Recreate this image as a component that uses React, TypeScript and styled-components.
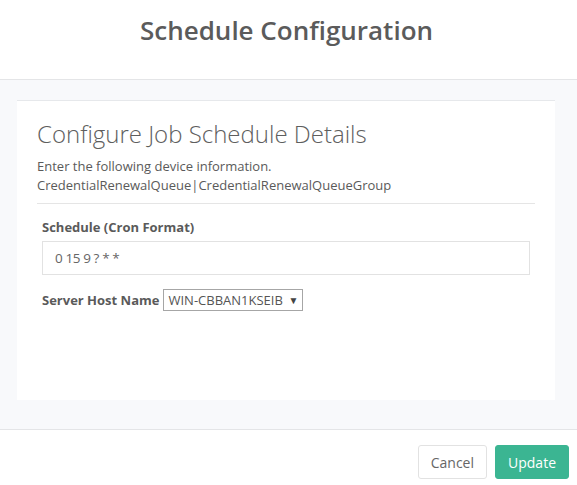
import styled, { createGlobalStyle } from 'styled-components';

const GlobalStyle = createGlobalStyle`
  * { box-sizing: border-box; }
  body {
    margin: 0;
    font-family: "Open Sans", "Noto Sans", sans-serif;
    color: #555;
    background: #fff;
  }
`;

const App = () => {
  return (
    <>
      <GlobalStyle />
      <Modal>
        <Header>
          <h1>Schedule Configuration</h1>
        </Header>
        <Body>
          <Card>
            <h2>Configure Job Schedule Details</h2>
            <p className="desc">
              Enter the following device information.
              <br />
              CredentialRenewalQueue|CredentialRenewalQueueGroup
            </p>
            <Form>
              <Field>
                <label>Schedule (Cron Format)</label>
                <TextInput defaultValue="0 15 9 ? * *" />
              </Field>
              <InlineField>
                <label>Server Host Name</label>
                <SelectWrap>
                  <Select defaultValue="WIN-CBBAN1KSEIB">
                    <option>WIN-CBBAN1KSEIB</option>
                  </Select>
                  <span className="arrow">▼</span>
                </SelectWrap>
              </InlineField>
            </Form>
          </Card>
        </Body>
        <Footer>
          <Button>Cancel</Button>
          <Button scheme="primary">Update</Button>
        </Footer>
      </Modal>
    </>
  );
};

const Modal = styled.div`
  width: 577px;
  height: 485px;
  display: flex;
  flex-direction: column;
`;

const Header = styled.div`
  height: 80px;
  border-bottom: 1px solid #e4e5e7;
  display: flex;
  justify-content: center;
  padding-top: 11px;

  h1 {
    margin: 0 4px 0 0;
    font-size: 26px;
    font-weight: 600;
    color: #5b5b5b;
    line-height: 38px;
  }
`;

const Body = styled.div`
  background: #f8f9fb;
  padding: 20px 22px 29px 17px;
  border-bottom: 1px solid #e4e5e7;
`;

const Card = styled.div`
  background: #fff;
  border-top: 1px solid #e6e8eb;
  height: 300px;
  padding: 16px 20px 0 20px;

  h2 {
    margin: 0;
    font-size: 24px;
    font-weight: 300;
    color: #5e5e5e;
    line-height: 34px;
  }

  .desc {
    margin: 6px 0 0;
    font-size: 13px;
    line-height: 19px;
    color: #5a5a5a;
    padding-bottom: 8px;
    border-bottom: 1px solid #e5e5e5;
  }
`;

const Form = styled.div`
  padding: 14px 5px 0;
  display: flex;
  flex-direction: column;
  gap: 14px;

  label {
    font-size: 13px;
    font-weight: 700;
    color: #5a5a5a;
  }
`;

const Field = styled.div`
  display: flex;
  flex-direction: column;
  gap: 5px;
`;

const InlineField = styled.div`
  display: flex;
  align-items: center;
  gap: 4px;
`;

const TextInput = styled.input`
  height: 34px;
  border: 1px solid #e2e2e2;
  padding: 0 12px;
  font-family: "Open Sans", sans-serif;
  font-size: 13.5px;
  color: #666;
  outline: none;
  letter-spacing: -0.4px;
`;

const SelectWrap = styled.div`
  position: relative;
  display: flex;

  .arrow {
    position: absolute;
    right: 5px;
    top: 4px;
    font-size: 10px;
    color: #444;
    pointer-events: none;
  }
`;

const Select = styled.select`
  appearance: none;
  height: 22px;
  width: 140px;
  border: 1px solid #a6a6a6;
  border-radius: 0;
  background: #fff;
  font-family: "Open Sans", sans-serif;
  font-size: 13px;
  color: #555;
  padding: 0 4px;
  outline: none;
`;

const Footer = styled.div`
  display: flex;
  justify-content: flex-end;
  gap: 8px;
  padding: 15px 8px 0 0;
`;

const Button = styled.button<{ scheme?: 'primary' }>`
  height: 34px;
  padding: 0 12px;
  border-radius: 3px;
  font-family: "Open Sans", sans-serif;
  font-size: 14px;
  cursor: pointer;
  border: 1px solid ${({ scheme }) => (scheme === 'primary' ? '#3bb592' : '#e2e2e2')};
  background: ${({ scheme }) => (scheme === 'primary' ? '#3bb592' : '#fff')};
  color: ${({ scheme }) => (scheme === 'primary' ? '#fff' : '#666')};
`;

export default App;
